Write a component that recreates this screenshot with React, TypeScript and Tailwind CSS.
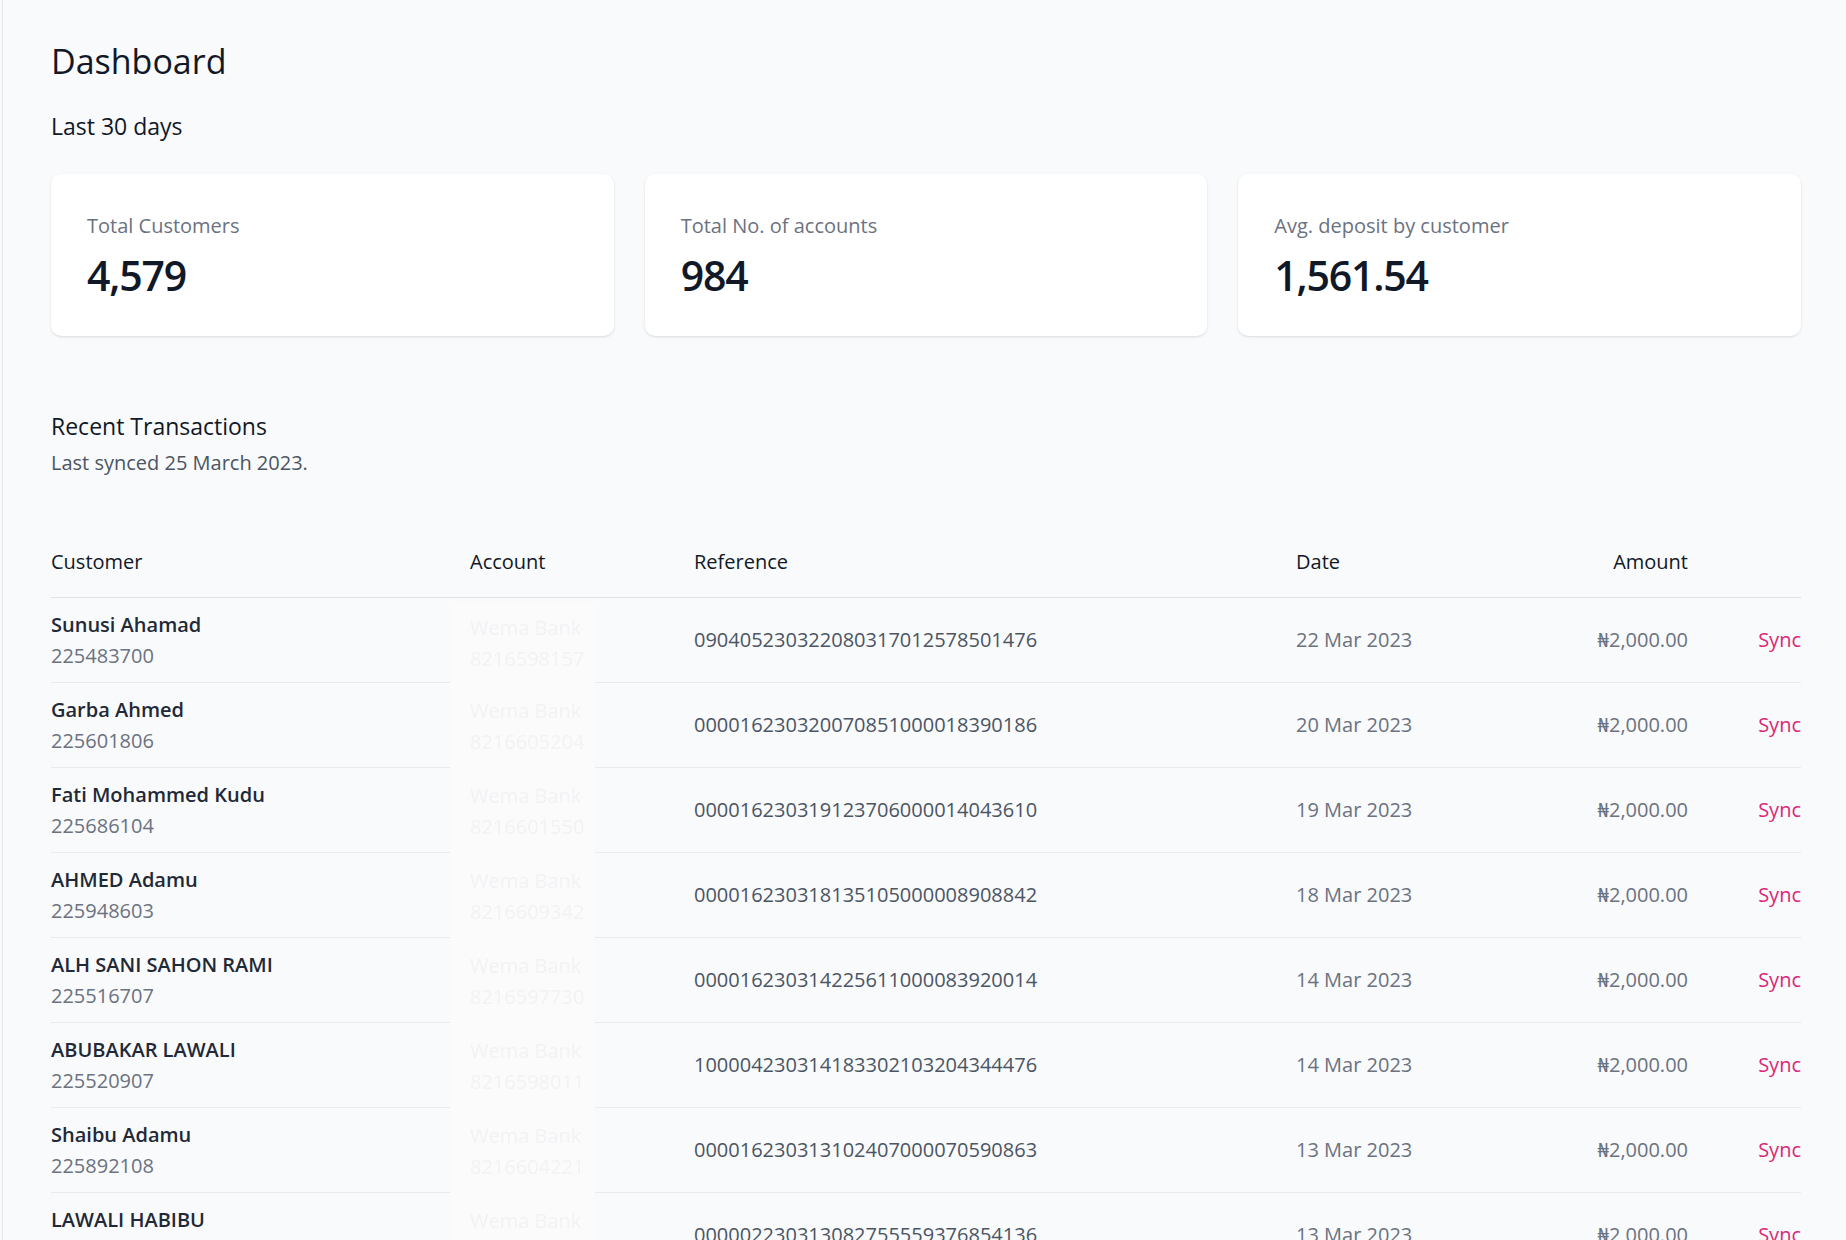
const transactions = [
  {
    name: "Sunusi Ahamad",
    customerId: "225483700",
    bank: "Wema Bank",
    account: "8216598157",
    reference: "090405230322080317012578501476",
    date: "22 Mar 2023",
    amount: "₦2,000.00",
  },
  {
    name: "Garba Ahmed",
    customerId: "225601806",
    bank: "Wema Bank",
    account: "8216605204",
    reference: "000016230320070851000018390186",
    date: "20 Mar 2023",
    amount: "₦2,000.00",
  },
  {
    name: "Fati Mohammed Kudu",
    customerId: "225686104",
    bank: "Wema Bank",
    account: "8216601550",
    reference: "000016230319123706000014043610",
    date: "19 Mar 2023",
    amount: "₦2,000.00",
  },
  {
    name: "AHMED Adamu",
    customerId: "225948603",
    bank: "Wema Bank",
    account: "8216609342",
    reference: "000016230318135105000008908842",
    date: "18 Mar 2023",
    amount: "₦2,000.00",
  },
  {
    name: "ALH SANI SAHON RAMI",
    customerId: "225516707",
    bank: "Wema Bank",
    account: "8216597730",
    reference: "000016230314225611000083920014",
    date: "14 Mar 2023",
    amount: "₦2,000.00",
  },
  {
    name: "ABUBAKAR LAWALI",
    customerId: "225520907",
    bank: "Wema Bank",
    account: "8216598011",
    reference: "100004230314183302103204344476",
    date: "14 Mar 2023",
    amount: "₦2,000.00",
  },
  {
    name: "Shaibu Adamu",
    customerId: "225892108",
    bank: "Wema Bank",
    account: "8216604221",
    reference: "000016230313102407000070590863",
    date: "13 Mar 2023",
    amount: "₦2,000.00",
  },
  {
    name: "LAWALI HABIBU",
    customerId: "225744390",
    bank: "Wema Bank",
    account: "8216602918",
    reference: "000002230313082755559376854136",
    date: "13 Mar 2023",
    amount: "₦2,000.00",
  },
  {
    name: "Musa Bello",
    customerId: "225610254",
    bank: "Wema Bank",
    account: "8216603375",
    reference: "000016230312091544000061237785",
    date: "12 Mar 2023",
    amount: "₦2,000.00",
  },
];

const stats = [
  { label: "Total Customers", value: "4,579" },
  { label: "Total No. of accounts", value: "984" },
  { label: "Avg. deposit by customer", value: "1,561.54" },
];

export default function App() {
  return (
    <div className="h-screen overflow-hidden bg-[#f9fafb] font-['Open_Sans','Noto_Sans',sans-serif]">
      <div className="ml-[2px] h-full border-l border-[#e5e7eb] pl-[48px] pr-[45px] pt-[41px]">
        <h1 className="text-[34px] leading-[40px] font-medium text-[#111827]">Dashboard</h1>
        <h2 className="mt-[29px] text-[23px] leading-[32px] font-medium text-[#111827]">Last 30 days</h2>

        {/* stat cards */}
        <div className="mt-[32px] grid grid-cols-3 gap-[31px]">
          {stats.map((s) => (
            <div
              key={s.label}
              className="rounded-[10px] bg-white px-[36px] pt-[38px] pb-[40px] shadow-[0_1px_3px_rgba(0,0,0,0.1),0_1px_2px_-1px_rgba(0,0,0,0.1)]"
            >
              <div className="text-[20px] leading-7 text-[#6b7280]">{s.label}</div>
              <div className="mt-[15px] text-[41px] leading-[41px] font-semibold tracking-[-1.2px] text-[#111827]">
                {s.value}
              </div>
            </div>
          ))}
        </div>

        {/* recent transactions */}
        <h2 className="mt-[74px] text-[23px] leading-[32px] font-medium text-[#111827]">Recent Transactions</h2>
        <p className="mt-[7px] text-[20px] leading-7 text-[#4b5563]">Last synced 25 March 2023.</p>

        <div className="mt-[71px]">
          <div className="grid grid-cols-[399px_145px_701px_200px_192px_113px] border-b border-[#dfe2e6] pb-[21px] text-[20px] leading-7 font-medium text-[#111827]">
            <div>Customer</div>
            <div className="pl-5">Account</div>
            <div className="pl-[99px]">Reference</div>
            <div>Date</div>
            <div className="text-right">Amount</div>
            <div></div>
          </div>

          {transactions.map((t, i) => (
            <div
              key={t.reference}
              className="grid h-[85px] grid-cols-[399px_145px_701px_200px_192px_113px] items-center border-b border-[#e8eaed] text-[20px]"
            >
              <div className="leading-[31px]">
                <div className="font-semibold text-[#1f2937]">{t.name}</div>
                <div className="text-[#6b7280]">{t.customerId}</div>
              </div>
              <div
                className={
                  i === 0
                    ? "relative mt-[5px] mb-[-1px] flex flex-col justify-center self-stretch overflow-hidden bg-[#fbfbfc] pl-5 leading-[31px] text-[#f1f2f4] blur-[0.6px]"
                    : "relative mb-[-1px] flex flex-col justify-center self-stretch overflow-hidden bg-[#fbfbfc] pl-5 leading-[31px] text-[#f1f2f4] blur-[0.6px]"
                }
              >
                <div className="whitespace-nowrap">{t.bank}</div>
                <div className="whitespace-nowrap">{t.account}</div>
              </div>
              <div className="pl-[99px] leading-7 text-[#4b5563]">{t.reference}</div>
              <div className="leading-7 text-[#6b7280]">{t.date}</div>
              <div className="text-right leading-7 text-[#6b7280]">{t.amount}</div>
              <div className="text-right leading-7 text-[#db2777]">Sync</div>
            </div>
          ))}
        </div>
      </div>
    </div>
  );
}
